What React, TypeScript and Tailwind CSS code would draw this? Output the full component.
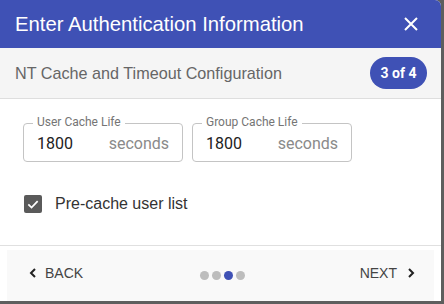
import React from "react";

function Field({ label, value }: { label: string; value: string }) {
  return (
    <div className="relative w-[160px] h-[39px] rounded-[4px] border border-[#c4c4c4] flex items-center px-[13px] font-['Roboto',sans-serif]">
      <span className="absolute -top-[9px] left-[9px] bg-white px-[4px] text-[12px] leading-[15px] text-[#757575]">{label}</span>
      <span className="text-[16px] text-[#212121] flex-1 mt-[2px]">{value}</span>
      <span className="text-[16px] text-[#8a8a8a] mt-[2px]">seconds</span>
    </div>
  );
}

export default function App() {
  return (
    <div className="w-[444px] h-[304px] bg-[#5e5e5e] font-['Liberation_Sans',Arial,sans-serif]">
      <div className="w-[441px] h-[301px] bg-white rounded-tr-[6px] overflow-hidden flex flex-col">
        <div className="h-[48px] bg-[#3f51b5] flex items-center justify-between pl-[15px] pr-[22px] shrink-0">
          <span className="text-white text-[20.3px]">Enter Authentication Information</span>
          <svg width="16" height="16" viewBox="0 0 16 16" className="text-white">
            <path d="M2 2 L14 14 M14 2 L2 14" stroke="currentColor" strokeWidth="2" />
          </svg>
        </div>
        <div className="h-[51px] bg-[#f5f5f5] border-b border-[#dedede] flex items-center justify-between pl-[15px] pr-[14px] shrink-0">
          <span className="text-[16.2px] text-[#666666] mt-[1px]">NT Cache and Timeout Configuration</span>
          <span className="h-[32px] w-[57px] rounded-full bg-[#3f51b5] text-white text-[14px] font-bold flex items-center justify-center font-['Roboto',sans-serif]">3 of 4</span>
        </div>
        <div className="flex-1 flex flex-col px-[23px] pt-[24px]">
          <div className="flex gap-[9px]">
            <Field label="User Cache Life" value="1800" />
            <Field label="Group Cache Life" value="1800" />
          </div>
          <div className="flex items-center mt-[30px] ml-[1px] gap-[13px]">
            <span className="w-[18px] h-[18px] rounded-[2px] bg-[#5a5a5a] flex items-center justify-center">
              <svg width="14" height="14" viewBox="0 0 24 24">
                <path d="M4 12.5 L9.5 18 L20 7" fill="none" stroke="white" strokeWidth="3" />
              </svg>
            </span>
            <span className="text-[16px] text-[#333333]">Pre-cache user list</span>
          </div>
        </div>
        <div className="border-t border-[#e0e0e0] h-[56px] shrink-0 px-[7px] pt-[4px]">
          <div className="h-full bg-[#f9f9f9] flex items-center pl-[21px] pr-[18px] pb-[5px]">
            <div className="flex-1 flex items-center gap-[7px] text-[#444] text-[14px]">
              <svg width="10" height="10" viewBox="0 0 10 10">
                <path d="M7 1 L3 5 L7 9" fill="none" stroke="#222" strokeWidth="2" />
              </svg>
              <span>BACK</span>
            </div>
            <div className="flex gap-[3px] mt-[4px]">
              <span className="w-[9px] h-[9px] rounded-full bg-[#bdbdbd]" />
              <span className="w-[9px] h-[9px] rounded-full bg-[#bdbdbd]" />
              <span className="w-[9px] h-[9px] rounded-full bg-[#3f51b5]" />
              <span className="w-[9px] h-[9px] rounded-full bg-[#bdbdbd]" />
            </div>
            <div className="flex-1 flex items-center justify-end gap-[9px] text-[#444] text-[14px]">
              <span>NEXT</span>
              <svg width="10" height="10" viewBox="0 0 10 10">
                <path d="M3 1 L7 5 L3 9" fill="none" stroke="#222" strokeWidth="2" />
              </svg>
            </div>
          </div>
        </div>
      </div>
    </div>
  );
}
